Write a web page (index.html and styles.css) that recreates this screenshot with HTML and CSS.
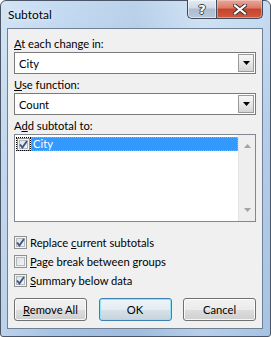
FILE: index.html
```html
<!DOCTYPE html>
<html lang="en">
  <head>
    <meta charset="UTF-8" />
    <title>Subtotal</title>
    <link rel="stylesheet" href="styles.css">
  </head>
  <body>
    <div class="window">
      <div class="titlebar">
        <span class="title">Subtotal</span>
        <div class="caption-buttons">
          <div class="cap help">?</div>
          <div class="cap close">
            <svg width="14" height="11" viewBox="0 0 14 11">
              <path d="M2 1.5 L12 9.5 M12 1.5 L2 9.5" stroke="#3a2a28" stroke-width="4" stroke-linecap="square"/>
              <path d="M2 1.5 L12 9.5 M12 1.5 L2 9.5" stroke="#ffffff" stroke-width="2.2" stroke-linecap="square"/>
            </svg>
          </div>
        </div>
      </div>

      <div class="client">
        <div class="field-label"><u>A</u>t each change in:</div>
        <div class="combo">
          <span class="combo-text">City</span>
          <span class="drop">
            <svg width="7" height="4" viewBox="0 0 7 4"><path d="M0 0 H7 L3.5 4 Z" fill="#000"/></svg>
          </span>
        </div>

        <div class="field-label"><u>U</u>se function:</div>
        <div class="combo">
          <span class="combo-text">Count</span>
          <span class="drop">
            <svg width="7" height="4" viewBox="0 0 7 4"><path d="M0 0 H7 L3.5 4 Z" fill="#000"/></svg>
          </span>
        </div>

        <div class="field-label">A<u>d</u>d subtotal to:</div>
        <div class="listbox">
          <div class="list-items">
            <div class="list-row">
              <span class="check-focus">
                <span class="checkbox">
                  <svg width="9" height="9" viewBox="0 0 9 9"><path d="M1 4.5 L3.4 7.5 L8 1" fill="none" stroke="#3d5589" stroke-width="1.9"/></svg>
                </span>
              </span>
              <span class="item selected">City</span>
            </div>
          </div>
          <div class="scrollbar">
            <svg width="7" height="4" viewBox="0 0 7 4"><path d="M0 4 H7 L3.5 0 Z" fill="#a3a3a3"/></svg>
            <svg width="7" height="4" viewBox="0 0 7 4"><path d="M0 0 H7 L3.5 4 Z" fill="#a3a3a3"/></svg>
          </div>
        </div>

        <div class="options">
          <div class="option">
            <span class="checkbox">
              <svg width="9" height="9" viewBox="0 0 9 9"><path d="M1 4.5 L3.4 7.5 L8 1" fill="none" stroke="#3d5589" stroke-width="1.9"/></svg>
            </span>
            <span>Replace <u>c</u>urrent subtotals</span>
          </div>
          <div class="option">
            <span class="checkbox"></span>
            <span><u>P</u>age break between groups</span>
          </div>
          <div class="option">
            <span class="checkbox">
              <svg width="9" height="9" viewBox="0 0 9 9"><path d="M1 4.5 L3.4 7.5 L8 1" fill="none" stroke="#3d5589" stroke-width="1.9"/></svg>
            </span>
            <span><u>S</u>ummary below data</span>
          </div>
        </div>

        <div class="buttons">
          <button class="btn"><u>R</u>emove All</button>
          <button class="btn default">OK</button>
          <button class="btn">Cancel</button>
        </div>
      </div>
    </div>
  </body>
</html>
```

FILE: styles.css
```css
* {
  padding: 0;
  margin: 0;
  box-sizing: border-box;
}

html,
body {
  width: 271px;
  height: 337px;
  overflow: hidden;
  background: #ffffff;
}

body {
  font-family: Lato, "Liberation Sans", sans-serif;
  font-size: 11.2px;
  color: #000;
}

.window {
  display: flex;
  flex-direction: column;
  width: 271px;
  height: 337px;
  padding: 0 7px 7px 6px;
  border: 1px solid #4a5668;
  border-radius: 6px 6px 3px 3px;
  background:
    linear-gradient(90deg, rgba(255,255,255,0.25), rgba(255,255,255,0) 20%, rgba(120,150,190,0.15) 50%, rgba(255,255,255,0.2) 75%, rgba(255,255,255,0) 100%),
    linear-gradient(180deg, #c6dcf2 0%, #b2cdea 40%, #a6c3e4 100%);
}

.titlebar {
  display: flex;
  align-items: flex-start;
  height: 27px;
}

.title {
  padding-top: 6px;
  padding-left: 1px;
  font-size: 12px;
  color: #000;
  text-shadow: 0 0 6px #e8f2fc, 0 0 3px #e8f2fc;
}

.caption-buttons {
  display: flex;
  margin-left: auto;
  margin-top: -1px;
  margin-right: 0;
}

.cap {
  display: flex;
  align-items: center;
  justify-content: center;
  height: 19px;
  border: 1px solid #3f4a5c;
  border-top: none;
}

.help {
  width: 29px;
  border-right: none;
  border-radius: 0 0 0 5px;
  background: linear-gradient(180deg, #e4ebf4 0%, #cfd9e6 45%, #adbcd0 50%, #b9c7d9 100%);
  box-shadow: inset 0 0 0 1px rgba(255,255,255,0.5);
  font-family: "DejaVu Sans", sans-serif;
  font-weight: bold;
  font-size: 13px;
  color: #fff;
  text-shadow: -1px 0 #37414f, 1px 0 #37414f, 0 -1px #37414f, 0 1px #37414f;
}

.close {
  width: 47px;
  border-radius: 0 0 5px 0;
  background: linear-gradient(180deg, #e8a89c 0%, #d97a68 45%, #c8432c 50%, #d15a3e 100%);
  box-shadow: inset 0 0 0 1px rgba(255,220,210,0.45);
}

.client {
  flex: 1;
  display: flex;
  flex-direction: column;
  padding: 8px 6px 0 6px;
  background: #f0f0f0;
  border: 1px solid #6f7f94;
}

.field-label {
  height: 14px;
  line-height: 14px;
  margin-bottom: 1px;
}

.combo {
  display: flex;
  align-items: center;
  height: 22px;
  margin-bottom: 4px;
  padding: 1px;
  border: 1px solid #7a7a7a;
  background: #fff;
}

.combo-text {
  flex: 1;
  padding-left: 3px;
}

.drop {
  display: flex;
  align-items: center;
  justify-content: center;
  width: 16px;
  height: 18px;
  border: 1px solid #9a9a9a;
  background: linear-gradient(180deg, #f6f6f6 0%, #e8e8e8 50%, #d5d5d5 100%);
}

.listbox {
  display: flex;
  height: 88px;
  border: 1px solid #828790;
  background: #fff;
}

.list-items {
  flex: 1;
  padding: 2px 0 0 1px;
}

.list-row {
  display: flex;
  height: 14px;
}

.check-focus {
  display: flex;
  align-items: center;
  justify-content: center;
  width: 15px;
  height: 14px;
  outline: 1px dotted #000;
  outline-offset: -1px;
}

.item {
  flex: 1;
  padding-left: 2px;
  line-height: 14px;
}

.selected {
  background: #3399ff;
  color: #fff;
  outline: 1px dotted #f0a030;
  outline-offset: -1px;
}

.scrollbar {
  display: flex;
  flex-direction: column;
  align-items: center;
  justify-content: space-between;
  width: 17px;
  padding: 9px 0 9px 0;
  background: #eeeeee;
  border-left: 1px solid #e4e4e4;
}

.checkbox {
  display: flex;
  align-items: center;
  justify-content: center;
  flex: none;
  width: 13px;
  height: 13px;
  border: 1px solid #8e8f8f;
  background: linear-gradient(135deg, #dcdee2 0%, #f7f7f7 100%);
  box-shadow: inset 0 0 0 1px #f4f4f4, inset 0 0 0 2px #b4b9bf;
}

.options {
  display: flex;
  flex-direction: column;
  margin-top: 11px;
}

.option {
  display: flex;
  align-items: center;
  gap: 3px;
  height: 19px;
}

.buttons {
  display: flex;
  justify-content: space-between;
  margin-top: 8px;
}

.btn {
  width: 73px;
  height: 23px;
  font-family: inherit;
  font-size: 11.2px;
  color: #000;
  border: 1px solid #707070;
  border-radius: 3px;
  background: linear-gradient(180deg, #f2f2f2 0%, #ebebeb 50%, #dddddd 51%, #cfcfcf 100%);
  box-shadow: inset 0 0 0 1px rgba(255,255,255,0.8);
}

.btn.default {
  border-color: #3c7fb1;
  box-shadow: inset 0 0 0 1px #8fe4f8;
  background: linear-gradient(180deg, #eef4f8 0%, #e4ecf2 50%, #d6e0e8 51%, #c8d4de 100%);
}
```
